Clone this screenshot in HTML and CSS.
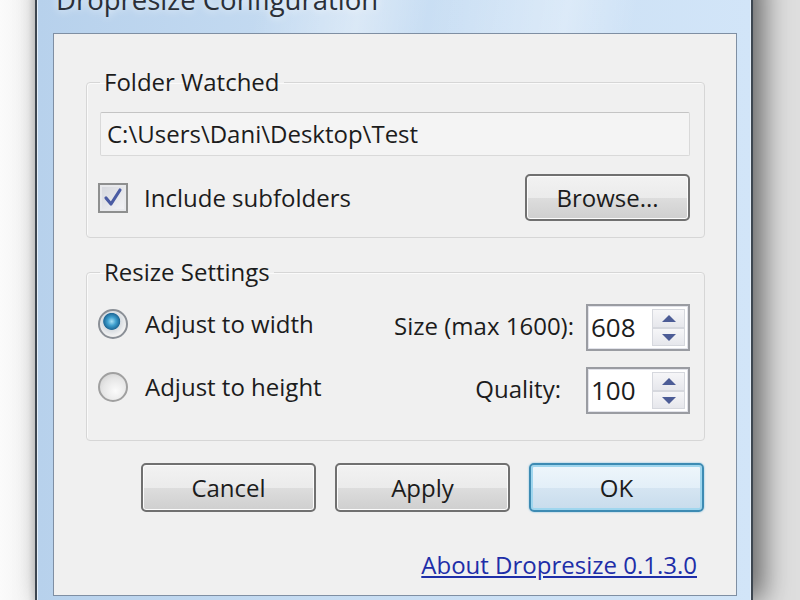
FILE: index.html
```html
<!DOCTYPE html>
<html lang="en">
<head>
  <meta charset="UTF-8">
  <title>Dropresize Configuration</title>
  <link rel="stylesheet" href="styles.css">
</head>
<body>
  <div class="window">
    <!-- Заголовок окна -->
    <div class="titlebar">Dropresize Configuration</div>

    <div class="client">
      <!-- Папка -->
      <fieldset class="group">
        <legend>Folder Watched</legend>
        <div class="path-box">C:\Users\Dani\Desktop\Test</div>
        <div class="row">
          <label class="check">
            <span class="checkbox">
              <svg width="22" height="22" viewBox="0 0 22 22"><path d="M4 11 L9 17 L18 3" fill="none" stroke="#4a5ba3" stroke-width="3.2" stroke-linecap="round" stroke-linejoin="round"/></svg>
            </span>
            Include subfolders
          </label>
          <button class="btn browse">Browse...</button>
        </div>
      </fieldset>

      <!-- Размер -->
      <fieldset class="group resize">
        <legend>Resize Settings</legend>
        <div class="settings">
          <label class="radio-row"><span class="radio on"></span>Adjust to width</label>
          <span class="field-label">Size (max 1600):</span>
          <div class="spinner"><span class="value">608</span><span class="spin"><span class="up"></span><span class="down"></span></span></div>

          <label class="radio-row"><span class="radio"></span>Adjust to height</label>
          <span class="field-label quality">Quality:</span>
          <div class="spinner"><span class="value">100</span><span class="spin"><span class="up"></span><span class="down"></span></span></div>
        </div>
      </fieldset>

      <!-- Кнопки -->
      <div class="buttons">
        <button class="btn">Cancel</button>
        <button class="btn">Apply</button>
        <button class="btn ok">OK</button>
      </div>

      <div class="about"><a href="#">About Dropresize 0.1.3.0</a></div>
    </div>
  </div>
</body>
</html>
```

FILE: styles.css
```css
/* Общие стили */
body {
  margin: 0;
  background: linear-gradient(to right, #fbfbfb 0, #f4f4f4 28px, #dedede 35px);
  font-family: 'Open Sans', 'Noto Sans', sans-serif;
  color: #1c1c1c;
  overflow: hidden;
  height: 600px;
}

/* Окно */
.window {
  box-sizing: border-box;
  width: 718px;
  height: 627px;
  margin: -27px 0 0 35px;
  padding: 0 14px 4px 16px;
  border: 2px solid #3d4650;
  border-bottom: none;
  border-radius: 8px 8px 0 0;
  background: linear-gradient(to right, #b7d1ec, #c6dcf2 40%, #d2e5f8);
  box-shadow: 10px 0 28px rgba(0, 0, 0, 0.55), inset 1px 0 0 #e4effa, inset -1px 0 0 #e4effa;
  display: flex;
  flex-direction: column;
}

.titlebar {
  height: 58px;
  flex: none;
  line-height: 50px;
  padding-left: 3px;
  font-size: 27.5px;
  color: #2a2f38;
  white-space: nowrap;
  text-shadow: 0 0 8px rgba(255, 255, 255, 0.9);
  background: linear-gradient(100deg, transparent 30%, rgba(255,255,255,0.35) 45%, transparent 55%, rgba(255,255,255,0.3) 75%, transparent 85%);
}

.client {
  flex: 1;
  background: #f0f0f0;
  border: 1px solid #7f8fa3;
  padding: 33px 31px 0 32px;
}

/* Группы */
.group {
  margin: 0;
  padding: 15px 14px 16px 13px;
  border: 1px solid #d6d6d6;
  border-radius: 4px;
  box-shadow: inset 1px 1px 0 #fafafa;
}

.group legend {
  padding: 0 4px;
  margin-left: 0;
  font-size: 24px;
  line-height: 30px;
}

.resize {
  margin-top: 19px;
  padding: 17px 14px 26px 13px;
}

.path-box {
  height: 42px;
  line-height: 42px;
  padding-left: 6px;
  font-size: 24px;
  background: #f4f4f4;
  border: 1px solid #d9d9d9;
  border-top-color: #c4c4c4;
  border-radius: 2px;
}

.row {
  display: flex;
  justify-content: space-between;
  align-items: center;
  margin-top: 18px;
}

.check {
  display: flex;
  align-items: center;
  gap: 16px;
  font-size: 24px;
  margin-left: -2px;
}

.checkbox {
  width: 26px;
  height: 26px;
  border: 2px solid #8e8f8f;
  background: linear-gradient(135deg, #d4d6dc, #f4f4f6);
  display: flex;
  align-items: center;
  justify-content: center;
  box-shadow: inset 0 0 0 2px #e8e9ec;
}

/* Кнопки */
.btn {
  font-family: inherit;
  font-size: 24px;
  color: #1c1c1c;
  height: 47px;
  border: 2px solid #707070;
  border-radius: 5px;
  background: linear-gradient(#f2f2f2 0%, #ebebeb 50%, #dddddd 51%, #cfcfcf 100%);
  box-shadow: inset 0 0 0 1px #fcfcfc;
  padding: 0;
}

.browse {
  width: 165px;
}

/* Настройки размера */
.settings {
  display: grid;
  grid-template-columns: 1fr auto 104px;
  column-gap: 12px;
  row-gap: 16px;
  align-items: center;
}

.radio-row {
  display: flex;
  align-items: center;
  gap: 17px;
  font-size: 24px;
  margin: 0 0 8px -2px;
}

.radio {
  box-sizing: border-box;
  width: 30px;
  height: 30px;
  border-radius: 50%;
  border: 2px solid #a0a0a0;
  background: radial-gradient(circle at 60% 65%, #fbfbfb 0, #e6e6e6 55%, #c9c9c9 100%);
}

.radio.on {
  border-color: #8a8f96;
  background: radial-gradient(circle at 45% 40%, #a9e0f5 0, #3fa0cf 20%, #1f6a99 38%, #d8dde2 42%, #f2f2f2 70%, #cfcfcf 100%);
}

.field-label {
  font-size: 24px;
  text-align: right;
  margin-bottom: 4px;
}

.quality {
  margin-right: 13px;
}

.spinner {
  display: flex;
  height: 43px;
  border: 2px solid #9a9ca2;
  background: #fff;
  box-shadow: inset 0 0 0 1px #e2e3ea;
}

.spinner .value {
  flex: 1;
  padding-left: 3px;
  font-size: 26px;
  line-height: 43px;
}

.spin {
  width: 33px;
  margin: 3px 3px 3px 0;
  display: flex;
  flex-direction: column;
}

.spin span {
  flex: 1;
  border: 1px solid #d6d8de;
  background: linear-gradient(#f6f6f8, #e6e7ec);
  position: relative;
}

.spin span::after {
  content: "";
  position: absolute;
  left: 50%;
  top: 50%;
  margin: -3px 0 0 -7px;
  border-left: 7px solid transparent;
  border-right: 7px solid transparent;
}

.spin .up::after {
  border-bottom: 7px solid #4c5c96;
}

.spin .down::after {
  border-top: 7px solid #4c5c96;
}

.buttons {
  display: flex;
  justify-content: flex-end;
  gap: 19px;
  margin-top: 22px;
  margin-right: 1px;
}

.buttons .btn {
  width: 175px;
  height: 49px;
}

.btn.ok {
  border-color: #3d8bb3;
  background: linear-gradient(#eef6fb 0%, #e3eff8 50%, #d5e5f2 51%, #c8dcec 100%);
  box-shadow: inset 0 0 0 2px #9fd6ee, 0 0 2px #6fb7dc;
}

.about {
  text-align: right;
  margin-top: 36px;
  padding-right: 8px;
}

.about a {
  font-size: 24px;
  color: #1e2ea8;
  text-decoration: underline;
}
```
